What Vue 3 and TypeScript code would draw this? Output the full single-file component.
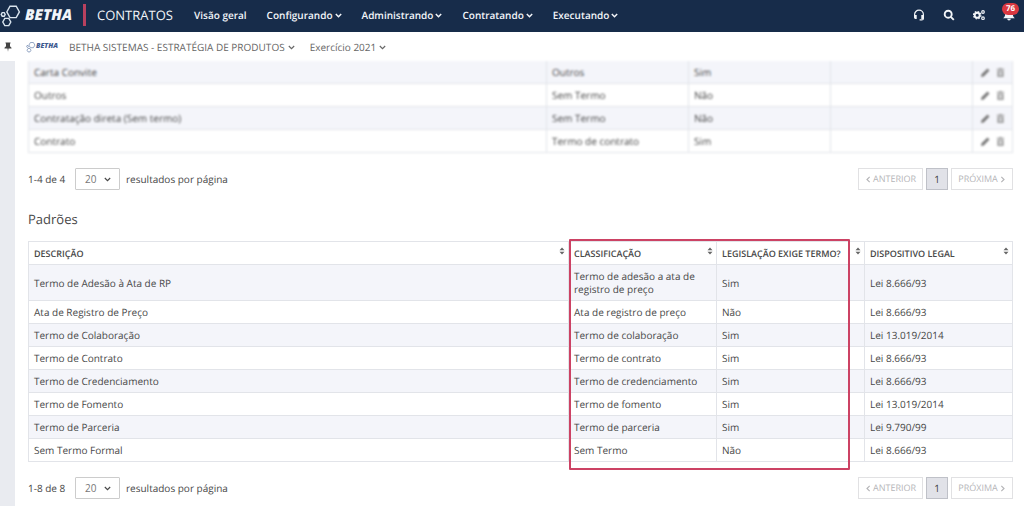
<script setup lang="ts">
import { ref } from 'vue'

interface OwnType {
  name: string
  kind: string
  required: string
}

interface DefaultType extends OwnType {
  law: string
}

const menus: string[] = ['Configurando', 'Administrando', 'Contratando', 'Executando']

const ownTypes: OwnType[] = [
  { name: 'Carta Convite', kind: 'Outros', required: 'Sim' },
  { name: 'Outros', kind: 'Sem Termo', required: 'Não' },
  { name: 'Contratação direta (Sem termo)', kind: 'Sem Termo', required: 'Não' },
  { name: 'Contrato', kind: 'Termo de contrato', required: 'Sim' },
]

const columns: string[] = ['Descrição', 'Classificação', 'Legislação exige termo?', 'Dispositivo legal']

const defaultTypes: DefaultType[] = [
  { name: 'Termo de Adesão à Ata de RP', kind: 'Termo de adesão a ata de registro de preço', required: 'Sim', law: 'Lei 8.666/93' },
  { name: 'Ata de Registro de Preço', kind: 'Ata de registro de preço', required: 'Não', law: 'Lei 8.666/93' },
  { name: 'Termo de Colaboração', kind: 'Termo de colaboração', required: 'Sim', law: 'Lei 13.019/2014' },
  { name: 'Termo de Contrato', kind: 'Termo de contrato', required: 'Sim', law: 'Lei 8.666/93' },
  { name: 'Termo de Credenciamento', kind: 'Termo de credenciamento', required: 'Sim', law: 'Lei 8.666/93' },
  { name: 'Termo de Fomento', kind: 'Termo de fomento', required: 'Sim', law: 'Lei 13.019/2014' },
  { name: 'Termo de Parceria', kind: 'Termo de parceria', required: 'Sim', law: 'Lei 9.790/99' },
  { name: 'Sem Termo Formal', kind: 'Sem Termo', required: 'Não', law: 'Lei 8.666/93' },
]

const ownPageSize = ref('20')
const defaultPageSize = ref('20')
</script>

<template>
  <div class="page">
    <header class="topbar">
      <a class="brand" href="#" aria-label="Betha">
        <svg class="brand-mark" viewBox="0 0 22 26" aria-hidden="true">
          <path d="M10 4.200h6.200l3.200 5.700-3.200 5.700H10L6.800 9.900z" />
          <path d="M4.800 16.400h4l2 3.600-2 3.600h-4l-2-3.600z" />
          <path d="M2.200 10.600h2l1 1.800-1 1.800h-2l-1-1.800z" />
        </svg>
        <span class="brand-name">BETHA</span>
      </a>
      <span class="brand-line"></span>
      <h1 class="product">CONTRATOS</h1>
      <nav class="menu">
        <a class="menu-item" href="#">Visão geral</a>
        <button v-for="m in menus" :key="m" type="button" class="menu-item">
          {{ m }}
          <svg class="chevron" viewBox="0 0 6 6" aria-hidden="true"><path d="M.7 1.7 3 4l2.3-2.3" /></svg>
        </button>
      </nav>
      <div class="tools">
        <button type="button" aria-label="Suporte">
          <svg viewBox="0 0 12 12" aria-hidden="true">
            <path class="line" d="M1.6 8V5.6a4.4 4.4 0 0 1 8.8 0V9.4q0 1.5-1.6 1.5H6.6" />
            <path d="M1 6h2.7v4H2.4Q1 10 1 8.6zM11 6H8.3v4h1.3Q11 10 11 8.6z" />
          </svg>
        </button>
        <button type="button" aria-label="Pesquisar">
          <svg viewBox="0 0 12 12" aria-hidden="true">
            <circle class="thick" cx="5.2" cy="5.2" r="3.5" />
            <path class="thick" d="m7.8 7.8 3 3" />
          </svg>
        </button>
        <button type="button" aria-label="Configurações">
          <svg viewBox="0 0 12 12" aria-hidden="true">
            <circle class="thick" cx="4.2" cy="6.2" r="2.5" />
            <circle class="teeth" cx="4.2" cy="6.2" r="3.7" />
            <circle class="line" cx="10" cy="3" r="1.3" />
            <circle class="line" cx="10" cy="9.2" r="1.3" />
          </svg>
        </button>
        <button type="button" class="bell" aria-label="Notificações: 76">
          <svg viewBox="0 0 12 12" aria-hidden="true">
            <path d="M6 1c2.600 0 3.800 1.600 3.800 3.500 0 2.400.5 3.300 2 4.700H.2c1.500-1.400 2-2.300 2-4.700C2.200 2.600 3.400 1 6 1zM4.200 9.800h3.600a1.800 1.800 0 0 1-3.600 0z" />
          </svg>
          <span class="badge">76</span>
        </button>
      </div>
    </header>

    <div class="context">
      <button type="button" class="pin" aria-label="Fixar menu">
        <svg viewBox="0 0 8 10" aria-hidden="true">
          <path d="M1.500.5h5v1H6v2.700l1.500 1.600v.8h-3L4 9.800l-.5-3.200h-3v-.8L2 4.200V1.500h-.5z" />
        </svg>
      </button>
      <span class="entity-logo" aria-hidden="true">
        <svg viewBox="0 0 10 12">
          <path d="M4.400 1.500h3l1.500 2.600-1.500 2.600h-3L2.900 4.100zM2 7.500h2l1 1.700-1 1.700H2l-1-1.700zM1 4.500h1l.5.9-.5.9H1l-.5-.9z" />
        </svg>
        <span>BETHA</span>
      </span>
      <button type="button" class="context-item">
        BETHA SISTEMAS - ESTRATÉGIA DE PRODUTOS
        <svg class="chevron" viewBox="0 0 6 6" aria-hidden="true"><path d="M.7 1.7 3 4l2.3-2.3" /></svg>
      </button>
      <button type="button" class="context-item">
        Exercício 2021
        <svg class="chevron" viewBox="0 0 6 6" aria-hidden="true"><path d="M.7 1.7 3 4l2.3-2.3" /></svg>
      </button>
    </div>

    <div class="body">
      <aside class="rail"></aside>
      <main class="content">
        <table class="grid own" aria-label="Tipos cadastrados">
          <colgroup>
            <col />
            <col class="w-own" />
            <col class="w-own" />
            <col class="w-own" />
            <col class="w-actions" />
          </colgroup>
          <tbody>
            <tr v-for="t in ownTypes" :key="t.name">
              <td>{{ t.name }}</td>
              <td>{{ t.kind }}</td>
              <td>{{ t.required }}</td>
              <td></td>
              <td>
                <span class="actions">
                  <button type="button" aria-label="Editar">
                    <svg viewBox="0 0 9 9" aria-hidden="true"><path d="M0 9l.6-2.700L6.500.5 8.500 2.500 2.700 8.400z" /></svg>
                  </button>
                  <button type="button" aria-label="Excluir">
                    <svg class="bin" viewBox="0 0 9 9" aria-hidden="true">
                      <path d="M3.200 0h2.600v.8h2.400v1H.8v-1h2.400zM1.400 2.400h6.200V9H1.400zM3 3.600v4.200h.6V3.600zm1.200 0v4.200h.6V3.600zm1.200 0v4.200H6V3.600z" fill-rule="evenodd" />
                    </svg>
                  </button>
                </span>
              </td>
            </tr>
          </tbody>
        </table>

        <div class="pager">
          <span class="count">1-4 de 4</span>
          <span class="size">
            <select id="own-size" v-model="ownPageSize">
              <option>20</option>
              <option>50</option>
            </select>
            <svg class="chevron" viewBox="0 0 6 6" aria-hidden="true"><path d="M.7 1.7 3 4l2.3-2.3" /></svg>
          </span>
          <label for="own-size">resultados por página</label>
          <nav class="pages" aria-label="Páginas dos tipos cadastrados">
            <button type="button" class="prev" disabled>
              <svg class="chevron" viewBox="0 0 6 6" aria-hidden="true"><path d="M4 .7 1.700 3 4 5.300" /></svg>ANTERIOR
            </button>
            <button type="button" class="current">1</button>
            <button type="button" class="next" disabled>
              PRÓXIMA<svg class="chevron" viewBox="0 0 6 6" aria-hidden="true"><path d="M2 .7 4.300 3 2 5.300" /></svg>
            </button>
          </nav>
        </div>

        <h2 class="title">Padrões</h2>

        <div class="framed">
          <table class="grid" aria-label="Padrões">
            <colgroup>
              <col />
              <col class="w-default" />
              <col class="w-default" />
              <col class="w-default" />
            </colgroup>
            <thead>
              <tr>
                <th v-for="c in columns" :key="c" scope="col">
                  <span class="head">
                    {{ c }}
                    <svg class="sort" viewBox="0 0 6 8" aria-hidden="true"><path d="M3 .5 5.500 3.300h-5zM3 7.500.5 4.700h5z" /></svg>
                  </span>
                </th>
              </tr>
            </thead>
            <tbody>
              <tr v-for="t in defaultTypes" :key="t.name">
                <td>{{ t.name }}</td>
                <td>{{ t.kind }}</td>
                <td>{{ t.required }}</td>
                <td>{{ t.law }}</td>
              </tr>
            </tbody>
          </table>
          <div class="frame" aria-hidden="true"></div>
        </div>

        <div class="pager">
          <span class="count">1-8 de 8</span>
          <span class="size">
            <select id="default-size" v-model="defaultPageSize">
              <option>20</option>
              <option>50</option>
            </select>
            <svg class="chevron" viewBox="0 0 6 6" aria-hidden="true"><path d="M.7 1.7 3 4l2.3-2.3" /></svg>
          </span>
          <label for="default-size">resultados por página</label>
          <nav class="pages" aria-label="Páginas dos padrões">
            <button type="button" class="prev" disabled>
              <svg class="chevron" viewBox="0 0 6 6" aria-hidden="true"><path d="M4 .7 1.700 3 4 5.300" /></svg>ANTERIOR
            </button>
            <button type="button" class="current">1</button>
            <button type="button" class="next" disabled>
              PRÓXIMA<svg class="chevron" viewBox="0 0 6 6" aria-hidden="true"><path d="M2 .7 4.300 3 2 5.300" /></svg>
            </button>
          </nav>
        </div>
      </main>
    </div>
  </div>
</template>

<style>
body {
  margin: 0;
  background: #fff;
}
</style>

<style scoped>
.page {
  display: flex;
  flex-direction: column;
  min-height: 100vh;
  overflow: hidden;
  box-sizing: border-box;
  font-family: "Open Sans", "Noto Sans", sans-serif;
  font-size: 10px;
  text-rendering: geometricPrecision;
  color: #484848;
}

button {
  display: flex;
  align-items: center;
  padding: 0;
  border: 0;
  background: none;
  font: inherit;
  text-rendering: inherit;
  color: inherit;
  cursor: pointer;
}

a {
  color: inherit;
  text-decoration: none;
}

svg {
  display: block;
  flex: none;
}

.chevron {
  width: 7px;
  height: 7px;
  fill: none;
  stroke: currentColor;
  stroke-width: 1;
}

.topbar {
  display: flex;
  align-items: center;
  height: 32px;
  padding-bottom: 2px;
  box-sizing: border-box;
  background: #172c4a;
  color: #f2f5f9;
}

.brand {
  display: flex;
  align-items: center;
  gap: 3px;
  width: 83px;
}

.brand-mark {
  width: 22px;
  height: 26px;
  fill: none;
  stroke: #d9e4ee;
  stroke-width: 1.4;
}

.brand-name {
  font-size: 15px;
  line-height: 28px;
  font-weight: 800;
  font-style: italic;
}

.brand-line {
  width: 3px;
  height: 22px;
  margin-right: 11px;
  background: #b8415f;
}

.product {
  width: 97px;
  margin: 0;
  font-size: 13px;
  line-height: 28px;
  font-weight: 400;
}

.menu {
  display: flex;
  gap: 20px;
}

.menu-item {
  display: flex;
  align-items: center;
  gap: 2px;
  font-size: 10px;
  line-height: 28px;
  font-weight: 600;
}

.menu-item .chevron {
  stroke-width: 1.3;
}

.tools {
  display: flex;
  align-items: center;
  gap: 18px;
  margin-left: auto;
  padding-right: 9px;
}

.tools svg {
  width: 12px;
  height: 12px;
  fill: #f2f5f9;
}

.tools .line,
.tools .thick,
.tools .teeth {
  fill: none;
  stroke: #f2f5f9;
  stroke-width: 1.2;
}

.tools .thick {
  stroke-width: 1.9;
}

.tools .teeth {
  stroke-dasharray: 1.6 1.3;
}

.bell {
  position: relative;
}

.badge {
  position: absolute;
  left: -1px;
  top: -6px;
  width: 17px;
  border-radius: 6px;
  background: #d93740;
  color: #fff;
  font-size: 8px;
  line-height: 12px;
  font-weight: 700;
  text-align: center;
}

.context {
  display: flex;
  align-items: center;
  height: 29px;
  padding-top: 1px;
  box-sizing: border-box;
  color: #666;
}

.pin {
  width: 26px;
  padding-left: 4px;
  box-sizing: border-box;
}

.pin svg {
  width: 8px;
  height: 10px;
  fill: #444;
}

.entity-logo {
  display: flex;
  align-items: center;
  width: 43px;
  font-size: 7px;
  line-height: 12px;
  font-weight: 800;
  font-style: italic;
  color: #3e5a8f;
}

.entity-logo svg {
  width: 10px;
  height: 12px;
  fill: none;
  stroke: #7d93b8;
  stroke-width: 0.8;
}

.context-item {
  gap: 3px;
  margin-right: 15px;
  font-size: 10px;
  line-height: 16px;
}

.body {
  display: flex;
  flex: 1;
}

.rail {
  flex: none;
  width: 15px;
  background: #e9ebf0;
}

.content {
  flex: 1;
  min-width: 0;
  padding: 0 11px 6px 13px;
}

.grid {
  width: 100%;
  border-collapse: collapse;
  table-layout: fixed;
  line-height: 13px;
}

.w-own {
  width: 142px;
}

.w-actions {
  width: 40px;
}

.w-default {
  width: 148px;
}

th,
td {
  height: 13px;
  padding: 5px 5px 4px;
  border: 1px solid #e2e4e9;
  text-align: left;
}

tbody tr:nth-child(odd) {
  background: #f4f5fa;
}

.own {
  border-top: 0;
  filter: blur(1px);
}

.own tr:first-child td {
  border-top: 0;
}

th {
  font-size: 9px;
  font-weight: 600;
  text-transform: uppercase;
  white-space: nowrap;
}

.head {
  display: flex;
  justify-content: space-between;
}

.sort {
  width: 6px;
  height: 8px;
  margin-right: -2px;
  fill: #666;
}

.actions {
  display: flex;
  gap: 6px;
  padding-left: 3px;
}

.actions svg {
  width: 9px;
  height: 9px;
  fill: #777;
}

.actions .bin {
  fill: #999;
}

.pager {
  display: flex;
  align-items: center;
  margin-top: 15px;
  font-size: 10px;
  line-height: 20px;
}

.count {
  width: 47px;
}

.size {
  display: grid;
  align-items: center;
  margin-right: 6px;
}

.size select,
.size .chevron {
  grid-area: 1 / 1;
}

.size .chevron {
  justify-self: end;
  margin-right: 9px;
  pointer-events: none;
}

.size select {
  appearance: none;
  width: 45px;
  height: 22px;
  padding: 0 9px;
  border: 1px solid #ccc;
  border-radius: 1px;
  background: #fff;
  font: inherit;
  color: #777;
}

.pages {
  display: flex;
  gap: 3px;
  margin-left: auto;
}

.pages button {
  justify-content: center;
  gap: 1px;
  height: 22px;
  box-sizing: border-box;
  border: 1px solid #e1e1e3;
  font-size: 9px;
  color: #b5b5b8;
}

.pages .prev {
  width: 65px;
}

.pages .next {
  width: 62px;
}

.pages .current {
  width: 22px;
  border-color: #bfc1c8;
  background: #e1e2e8;
  font-size: 10px;
  color: #444;
}

.title {
  margin: 19px 0 12px;
  font-size: 13px;
  line-height: 20px;
  font-weight: 400;
}

.framed {
  position: relative;
}

.frame {
  position: absolute;
  top: -2px;
  right: 163px;
  bottom: -8px;
  width: 281px;
  box-sizing: border-box;
  border: 2px solid #cc4264;
  border-radius: 1px;
  pointer-events: none;
}
</style>
